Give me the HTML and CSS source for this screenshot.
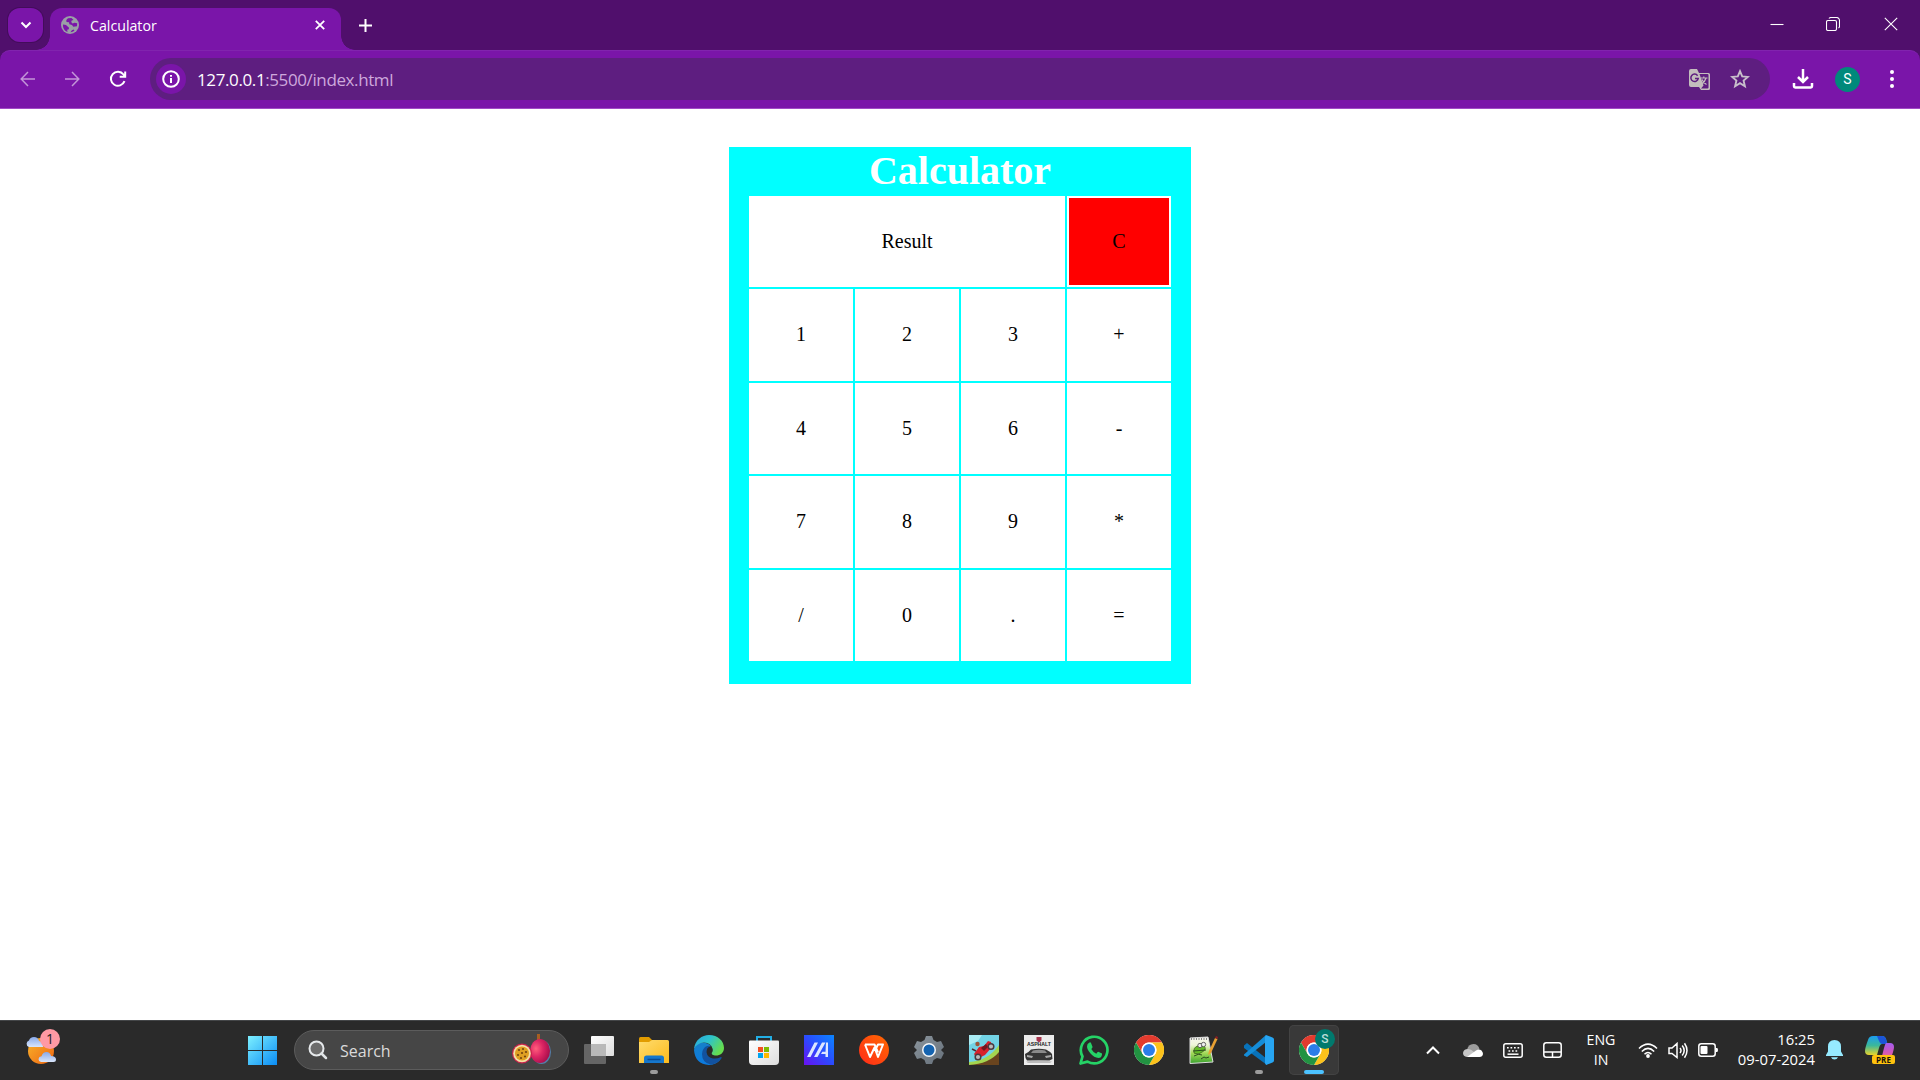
FILE: index.html
```html
<!DOCTYPE html>
<html lang="en">
<head>
<meta charset="utf-8">
<title>Calculator</title>
<link rel="stylesheet" href="styles.css">
</head>
<body>
<svg class="defs" width="0" height="0" aria-hidden="true">
  <defs>
    <linearGradient id="win" x1="0" y1="0" x2="1" y2="1"><stop offset="0" stop-color="#7df0ff"/><stop offset="1" stop-color="#0a8cf5"/></linearGradient>
    <linearGradient id="sun" x1="0" y1="0" x2="1" y2="1"><stop offset="0" stop-color="#f9b52b"/><stop offset="1" stop-color="#ee6512"/></linearGradient>
    <linearGradient id="cloud" x1="0" y1="0" x2="0" y2="1"><stop offset="0" stop-color="#88a9ea"/><stop offset="1" stop-color="#d9e6fb"/></linearGradient>
    <radialGradient id="fruit" cx=".3" cy=".4" r=".7"><stop offset="0" stop-color="#ff5f7c"/><stop offset=".5" stop-color="#dc2564"/><stop offset="1" stop-color="#a80f4c"/></radialGradient>
    <linearGradient id="folder" x1="0" y1="0" x2="1" y2="1"><stop offset="0" stop-color="#ffdc6e"/><stop offset="1" stop-color="#fcba1c"/></linearGradient>
    <linearGradient id="edgeTop" x1="0" y1="0" x2="1" y2=".5"><stop offset="0" stop-color="#2aa5df"/><stop offset=".5" stop-color="#2dc3cd"/><stop offset="1" stop-color="#65dd4f"/></linearGradient>
    <linearGradient id="edgeLow" x1="0" y1="0" x2="0" y2="1"><stop offset="0" stop-color="#1780c8"/><stop offset="1" stop-color="#0b7ae0"/></linearGradient>
    <linearGradient id="myasus" x1="1" y1="0" x2="0" y2="1"><stop offset="0" stop-color="#0a86ff"/><stop offset=".5" stop-color="#2b4bff"/><stop offset="1" stop-color="#6a10f0"/></linearGradient>
    <linearGradient id="wps" x1="0" y1="1" x2="1" y2="0"><stop offset="0" stop-color="#ff2a1a"/><stop offset="1" stop-color="#ff6a00"/></linearGradient>
    <linearGradient id="gear" x1="0" y1="0" x2="1" y2="1"><stop offset="0" stop-color="#8b959d"/><stop offset="1" stop-color="#66707a"/></linearGradient>
    <linearGradient id="npp" x1="0" y1="0" x2="0" y2="1"><stop offset="0" stop-color="#f7f7f0"/><stop offset=".3" stop-color="#eef6d8"/><stop offset=".6" stop-color="#a6dc5a"/><stop offset="1" stop-color="#37a02c"/></linearGradient>
    <linearGradient id="copA" x1="0" y1="0" x2="0" y2="1"><stop offset="0" stop-color="#1b9df0"/><stop offset=".5" stop-color="#3bb89a"/><stop offset="1" stop-color="#e9d22a"/></linearGradient>
    <linearGradient id="copB" x1="0" y1="0" x2="0" y2="1"><stop offset="0" stop-color="#a35cf0"/><stop offset=".5" stop-color="#d358b8"/><stop offset="1" stop-color="#ff7a60"/></linearGradient>
    <linearGradient id="pane" x1="0" y1="0" x2="1" y2="1"><stop offset="0" stop-color="#fff"/><stop offset="1" stop-color="#ddd"/></linearGradient>
    <symbol id="chrome" viewBox="0 0 30 30">
      <circle cx="15" cy="15" r="15" fill="#fff"/>
      <path d="M2 7.500A15 15 0 0 1 28 7.500H15A7.500 7.500 0 0 0 8.500 18.700Z" fill="#e33b2e"/>
      <path d="M28 7.500A15 15 0 0 1 15 30L21.500 18.700A7.500 7.500 0 0 0 15 7.500Z" fill="#fcc21b"/>
      <path d="M15 30A15 15 0 0 1 2 7.500L8.500 18.700A7.500 7.500 0 0 0 21.500 18.700Z" fill="#229342"/>
      <circle cx="15" cy="15" r="7.500" fill="#fff"/>
      <circle cx="15" cy="15" r="6" fill="#2b7de9"/>
    </symbol>
  </defs>
</svg>

<div class="browser">
  <header class="tabstrip">
    <button class="tab-search"><svg width="12" height="8" viewBox="0 0 12 8"><path d="M1.500 1.500 6 6l4.500-4.500" class="line w2"/></svg></button>
    <div class="tab">
      <svg width="18" height="18" viewBox="0 0 18 18"><circle cx="9" cy="9" r="9" fill="#9aa0a6"/><path d="M10.500 2.100 7 2.200 5.300 4.100 5.500 6 8 6.300 8.400 8.300 11 9l1.300 1.800 3.700-.6.2-3-2.500-.5-2.200.8-1.300-1.600.5-1.500 1.800-.5ZM2 8.500l3 .4 3 2.800-.2 1.500-1.600.6.300 2.300C3.700 15 1.700 12.300 2 8.500ZM9.500 16.200l1.400-2 1.900-.6.6 1.100a8 8 0 0 1-3.900 1.500Z" fill="#7a15a9"/></svg>
      <span class="tab-title">Calculator</span>
      <svg class="tab-close" width="10" height="10" viewBox="0 0 10 10"><path d="M.8.8l8.400 8.400M9.200.8.8 9.200" class="line w18"/></svg>
    </div>
    <svg class="new-tab" width="13" height="13" viewBox="0 0 13 13"><path d="M6.500 0v13M0 6.500h13" class="line w2"/></svg>
    <div class="window-buttons">
      <svg width="14" height="14" viewBox="0 0 14 14"><path d="M.5 7.500h13" class="line"/></svg>
      <svg width="14" height="14" viewBox="0 0 14 14"><rect x=".5" y="3.500" width="10" height="10" rx="1.500" class="line"/><path d="M3 1.500Q3.500.5 5 .5h5.500a3 3 0 0 1 3 3V9.500q0 1-1 1.500" class="line"/></svg>
      <svg width="14" height="14" viewBox="0 0 14 14"><path d="M.8.8l12.400 12.400M13.200.8.8 13.200" class="line"/></svg>
    </div>
  </header>
  <nav class="toolbar">
    <svg class="dim" width="16" height="16" viewBox="0 0 16 16"><path d="M15 8H1.500M8 1 1.200 8 8 15" class="line w15"/></svg>
    <svg class="dim" width="16" height="16" viewBox="0 0 16 16"><path d="M1 8h13.500M8 1l6.800 7L8 15" class="line w15"/></svg>
    <svg width="18" height="18" viewBox="0 0 18 18"><path d="M15.500 11.200A7 7 0 1 1 14.500 4.500L16 6.500M16.200 1.500v5.300h-5.500" class="line w2"/></svg>
    <div class="omnibox">
      <span class="site-info"><svg width="18" height="18" viewBox="0 0 18 18"><circle cx="9" cy="9" r="7.800" class="line w2"/><path d="M9 8v5M9 5v1.700" class="line w2"/></svg></span>
      <span class="url"><b>127.0.0.1</b>:5500/index.html</span>
      <svg class="translate" width="21" height="21" viewBox="0 0 21 21"><path d="M2 0h6l2 4h9.500Q21 4 21 5.500v14q0 1.500-1.500 1.500H12l-2-3H2Q0 18 0 16V2Q0 0 2 0Z" fill="#c3bdbd"/><path d="M10.500 5h8q1 0 1 1v12.500q0 1-1 1H12l2.500-3Z" fill="#5e1e80"/><path d="M8.600 6.700A3.700 3.700 0 1 0 9.200 9.500H6" fill="none" stroke="#5e1e80" stroke-width="1.500"/><path d="M11.500 9h7M14.800 7.500V9M17 9q-1 4-4.500 6M13 10.500q1.500 3.500 4.500 5" fill="none" stroke="#c3bdbd" stroke-width="1.200"/></svg>
      <svg width="20" height="20" viewBox="0 0 20 20"><path d="M10 2.200 12.200 7.400 17.900 7.900 13.600 11.600 14.900 17.200 10 14.200 5.100 17.200 6.400 11.600 2.100 7.900 7.800 7.400Z" fill="none" stroke="#c8bfcb" stroke-width="1.900"/></svg>
    </div>
    <svg class="download" width="22" height="20" viewBox="0 0 22 20"><path d="M11 0v12M6 8l5 5 5-5" class="line w25"/><path d="M2 14v3.300q0 1.200 1.200 1.200h15.600q1.200 0 1.200-1.200V14" class="line w25"/></svg>
    <span class="avatar">S</span>
    <svg width="4" height="18" viewBox="0 0 4 18" fill="#fff"><circle cx="2" cy="2" r="2"/><circle cx="2" cy="9" r="2"/><circle cx="2" cy="16" r="2"/></svg>
  </nav>
</div>

<main class="page">
  <section class="calculator">
    <h1>Calculator</h1>
    <div class="keys">
      <div class="key result">Result</div><div class="key clear">C</div>
      <div class="key">1</div><div class="key">2</div><div class="key">3</div><div class="key">+</div>
      <div class="key">4</div><div class="key">5</div><div class="key">6</div><div class="key">-</div>
      <div class="key">7</div><div class="key">8</div><div class="key">9</div><div class="key">*</div>
      <div class="key">/</div><div class="key">0</div><div class="key">.</div><div class="key">=</div>
    </div>
  </section>
</main>

<footer class="taskbar">
  <div class="weather">
    <svg width="32" height="32" viewBox="0 0 32 32"><circle cx="15" cy="17" r="13" fill="url(#sun)"/><path d="M3 13a3.400 3.400 0 0 1 0-6.500Q4 3 8 3q4 0 5 4 4 0 4 6Z" fill="url(#cloud)"/><path d="M15 28q-2.500-.5-2.500-3 .3-2.500 3-2.800Q17 18 20.500 18q3.500 0 4.500 4 5 0 5 3.500 0 2.500-2.500 2.500Z" fill="url(#cloud)"/></svg>
    <span class="badge">1</span>
  </div>
  <svg class="start" width="29" height="29" viewBox="0 0 29 29"><path d="M0 0h14v14H0ZM15 0h14v14H15ZM0 15h14v14H0ZM15 15h14v14H15Z" fill="url(#win)"/></svg>
  <div class="search">
    <svg width="20" height="20" viewBox="0 0 20 20"><circle cx="8.500" cy="8.500" r="7" fill="#6c6c6c" stroke="#e6e9eb" stroke-width="2"/><path d="M13.500 13.500 18 18" stroke="#dfe3e5" stroke-width="2.500" stroke-linecap="round"/></svg>
    <span>Search</span>
    <svg width="39" height="32" viewBox="0 0 39 32"><path d="M25 0h3v7h-3Z" fill="#a85e22"/><ellipse cx="29.500" cy="18" rx="9.500" ry="12" fill="#547da8"/><ellipse cx="28" cy="17" rx="10" ry="12" fill="url(#fruit)"/><circle cx="10" cy="19.500" r="10" fill="#cb224c"/><circle cx="10" cy="19.500" r="8.800" fill="#f3dfa6"/><circle cx="10" cy="19.500" r="7" fill="#dfa022"/><g fill="#744510"><circle cx="7" cy="16" r="1.100"/><circle cx="11" cy="15" r="1.100"/><circle cx="14" cy="18" r="1.100"/><circle cx="10" cy="19" r="1.100"/><circle cx="6" cy="21" r="1.100"/><circle cx="13" cy="22.500" r="1.100"/><circle cx="9" cy="24" r="1.100"/></g></svg>
  </div>
  <div class="apps">
    <span class="app"><svg width="30" height="30" viewBox="0 0 30 30"><rect x="0" y="9" width="22" height="20" rx="1" fill="#656565"/><rect x="7" y="1" width="23" height="20" rx="1" fill="url(#pane)"/><path d="M7 9h15v12H8q-1 0-1-1Z" fill="#b9b9b9"/></svg></span>
    <span class="app open"><svg width="30" height="30" viewBox="0 0 30 30"><path d="M0 3.500Q0 2 1.500 2H10l3 3v4H0Z" fill="#e29c00"/><path d="M0 7h10l3-2h15.500Q30 5 30 6.500V28H0Z" fill="url(#folder)"/><path d="M5 28v-5q0-2.500 2.500-2.500h15Q25 20.500 25 23v5Z" fill="#1677cc"/><path d="M8.500 24.500h13" stroke="#0b4b92" stroke-width="1.500"/></svg></span>
    <span class="app"><svg width="30" height="30" viewBox="0 0 30 30"><path d="M0 15Q1 8 8 7.500q6 0 9 3.500-5 1-5 6 0 5 5 7 5 1.500 10.500-1Q23 30 15 30 1 29 0 15Z" fill="url(#edgeLow)"/><path d="M9.500 14q2.500-4 7.500-3-5 1-4.500 6.500 1 5 6.500 6 4 .5 8-1.500 1 0 .5 1-4 6-11 6.500Q8 27.500 8 19q0-3 1.500-5Z" fill="#12529f"/><path d="M0 14C1 5 8 0 15 0c9 0 15 6 15 13 0 5-4 7.500-8 7.500-3 0-5-1.300-4-3 1-1.500 1-2.500.5-4Q17 8 10 7.500 3 8 0 14Z" fill="url(#edgeTop)"/></svg></span>
    <span class="app"><svg width="30" height="30" viewBox="0 0 30 30"><path d="M8 7V2h14v5" fill="none" stroke="#22aee4" stroke-width="2"/><path d="M0 6.500Q0 5.500 1 5.500h28q1 0 1 1V26q0 4-4 4H4q-4 0-4-4Z" fill="url(#pane)"/><path d="M9 12h5v5H9Z" fill="#f25022"/><path d="M15 12h5v5h-5Z" fill="#7fba00"/><path d="M9 18h5v5H9Z" fill="#00a4ef"/><path d="M15 18h5v5h-5Z" fill="#ffb900"/></svg></span>
    <span class="app"><svg width="30" height="30" viewBox="0 0 30 30"><path d="M0 0h30v30H0Z" fill="url(#myasus)"/><path d="M3 22 10.500 7.500h3.500L6.500 22ZM10 22l8-14.500h3.500L13.500 22ZM22 7.500h2V22h-2.500v-3H17l1.300-2.300h3.200Z" fill="#dce6ff"/></svg></span>
    <span class="app"><svg width="30" height="30" viewBox="0 0 30 30"><circle cx="15" cy="15" r="15" fill="url(#wps)"/><path d="M6 9.500h9.500l3.500 8M6 9.500 11 22l4.500-9.500L19 22 24 9.500h-5l-1.500 3" fill="none" stroke="#fff" stroke-width="2" stroke-linejoin="round"/></svg></span>
    <span class="app"><svg width="30" height="30" viewBox="0 0 30 30"><path d="M12 1h6l1.500 4L23 7l4-1 3 6-3 3 3 3-3 6-4-1-3.500 2L18 29h-6l-1.500-4L7 23l-4 1-3-6 3-3-3-3 3-6 4 1 3.500-2Z" fill="url(#gear)"/><circle cx="15" cy="15" r="7" fill="#f5f8fb"/><circle cx="15" cy="15" r="5.500" fill="#1463b0"/></svg></span>
    <span class="app"><svg width="30" height="30" viewBox="0 0 30 30"><path d="M0 0h30v30H0Z" fill="#72d4e6"/><path d="M0 0h13l-4 6-9 4Z" fill="#a9ecf4"/><path d="M0 27Q19 26 30 10v20H0Z" fill="#a4d650"/><path d="M0 30Q20 29 30 17v13Z" fill="#69441e"/><path d="m5 19 5-7 5-1 4-5 3 1 1 5-7 8-8 4Z" fill="#d8202b"/><path d="m12 13 5-4 2 3-4 4Z" fill="#701820"/><circle cx="8.500" cy="9" r="2.200" fill="#9b563a"/><path d="m3 14 4 2" stroke="#4f2b33" stroke-width="1.500"/><circle cx="9" cy="22" r="2.800" fill="#bbb" stroke="#4a3a40" stroke-width="1.500"/><circle cx="22" cy="11.500" r="2.800" fill="#bbb" stroke="#4a3a40" stroke-width="1.500"/></svg></span>
    <span class="app"><svg width="30" height="30" viewBox="0 0 30 30"><path d="M0 0h30v30H0Z" fill="#ececec"/><path d="M12.500 2h5v3.500L15 7.500l-2.500-2Z" fill="#a8354d"/><text x="15" y="11.300" class="asphalt" text-anchor="middle" textLength="24" lengthAdjust="spacingAndGlyphs">ASPHALT</text><path d="M1 19q3-1 6-4.500 8-1.500 15 0 4 2 6 4.500l.5 5-3 1.500H3L1.500 23Z" fill="#353535"/><path d="M9 15.500q6-1.500 12 0l2 2.500H7Z" fill="#8a8a8a"/><path d="m3 20 6 1-1 2-5-1Zm24 0-6 1 1 2 5-1Z" fill="#a7a7a7"/><path d="M2 26.500q13-2 26 0l-2 1.500H4Z" fill="#bbb"/></svg></span>
    <span class="app"><svg width="30" height="30" viewBox="0 0 30 30"><path d="M1.500 28.500 3.500 21.500A13.300 13.300 0 1 1 8.500 26.600Z" fill="none" stroke="#25d366" stroke-width="2.700" stroke-linejoin="round"/><path d="M10.500 7.500Q8 8.500 8 11.500q0 3 3.500 7t8 4.500q3 0 3.500-3.500v-1L19.300 16.700q-.8 0-2 2-3-1-5-4.700 1.500-1.500 1.200-2.200L12 8Q11.500 7 10.500 7.500Z" fill="#25d366"/></svg></span>
    <span class="app"><svg width="30" height="30"><use href="#chrome"/></svg></span>
    <span class="app"><svg width="30" height="30" viewBox="0 0 30 30"><path d="m1 3 18-1 5 25-23 1.500Z" fill="url(#npp)" stroke="#ddd"/><path d="M2 4h17" stroke="#888" stroke-width="2" stroke-dasharray="1 1.500"/><path d="M5 18q-1-6 4-7 3-1 6 0 3 3-1 5.500-5 4-8 2Z" fill="#65bb28" stroke="#3a5520" stroke-width=".7"/><circle cx="11" cy="10.500" r="2.200" fill="#eee" stroke="#444" stroke-width=".8"/><circle cx="14.500" cy="9.500" r="2.200" fill="#eee" stroke="#444" stroke-width=".8"/><path d="m4 16 13-1M5 21q5-3 8-1M12 24l3-2 2 1 3-1" fill="none" stroke="#25401c" stroke-width=".9"/><path d="m19 20 1-4 6-13 2.500 1L22 18Z" fill="#e8a032"/><path d="m26 3 1-2 2 1-.5 2Z" fill="#8b1d24"/></svg></span>
    <span class="app open"><svg width="30" height="30" viewBox="0 0 30 30"><path d="M0 10.500 3 8l20 16v6L0 13Z" fill="#0872b9"/><path d="M0 19.500 22 0v7L3 22 0 20.500Z" fill="#158dd8"/><path d="m22 0 6.500 2.500Q30 3 30 4.500v21q0 1.500-1.500 2L22 30l-1-2V2Z" fill="#27a5f2"/></svg></span>
    <span class="app active"><svg width="30" height="30"><use href="#chrome"/></svg><span class="profile">S</span></span>
  </div>
  <div class="tray">
    <svg width="14" height="9" viewBox="0 0 14 9"><path d="M1 7.500 7 1.500l6 6" class="line w2"/></svg>
    <svg width="20" height="13" viewBox="0 0 20 13"><path d="M4 6Q5 0 10.500 0 15 0 16.500 5l-5 4Z" fill="#9b9b9b"/><path d="M4 13q-4-.5-4-4 .5-4 5-4 3 0 6 3l6 4Z" fill="#c6c6c6"/><path d="M4 13 13 6.500q3-2 5.500 0Q20 8 20 10q-.5 3-3.500 3Z" fill="#fff"/></svg>
    <svg width="20" height="15" viewBox="0 0 20 15"><rect x=".8" y=".8" width="18.400" height="13.400" rx="2" class="line w15"/><path d="M4 4.800h12.500M5.500 8h10" class="line w15" stroke-dasharray="1.700 1.800"/><path d="M4.500 11.200h11" class="line w15"/></svg>
    <svg width="19" height="16" viewBox="0 0 19 16"><rect x=".8" y=".8" width="17.400" height="14.400" rx="2.500" class="line w15"/><path d="M1 10h17M9.500 10v5" class="line w15"/></svg>
    <span class="language">ENG<br>IN</span>
    <svg width="20" height="15" viewBox="0 0 20 15"><path d="M1 5.500Q10-3.300 19 5.500M3.800 8.500q6.200-6.200 12.400 0M6.500 11.300q3.500-3.500 7 0" class="line w15"/><circle cx="10" cy="13" r="1.900" fill="#fff"/></svg>
    <svg width="20" height="17" viewBox="0 0 20 17"><path d="M1 6h3l5-4.500v14L4 11.500H1ZM12 6q2 2.500 0 5M14.200 3.500q4 5 0 10M16.500 1.300q5 7.200 0 14.400" class="line w15"/></svg>
    <svg width="20" height="14" viewBox="0 0 20 14"><rect x=".8" y=".8" width="16.400" height="12.400" rx="2.500" class="line w15"/><rect x="2.500" y="3" width="7" height="8" rx="1" fill="#fff"/><path d="M17.500 5H19q1 0 1 2t-1 2h-1.500Z" fill="#fff"/></svg>
    <span class="clock">16:25<br>09-07-2024</span>
    <svg class="bell" width="17" height="20" viewBox="0 0 17 20"><path d="M8.500 0q6.300 0 6.500 6.500v5L17 15v1H0v-1l2-3.500v-5Q2.200 0 8.500 0ZM5 17.200h7Q11 19.500 8.500 19.500T5 17.200Z" fill="#96eaff"/></svg>
    <div class="copilot">
      <svg width="30" height="28" viewBox="0 0 30 28"><path d="M8 0h9q3 0 4 3l1.500 5H17q-2 0-3 4l-2 7H4q-4 0-4-4 0-3 3-11Q4 0 8 0Z" fill="url(#copA)"/><path d="M12 0h5q3 0 4 3l1.500 5H17q-2 0-3-3Z" fill="#1c55d8"/><path d="M21 7h4q4 0 4 4 0 3-3 11-1 4-5 4h-9q4-1 5-6l2-8q1-4 2-5Z" fill="url(#copB)"/></svg>
      <span class="pre">PRE</span>
    </div>
  </div>
</footer>
</body>
</html>
```
FILE: styles.css
```css
* { box-sizing: border-box; }
html, body { margin: 0; height: 100%; }
body {
  display: flex;
  flex-direction: column;
  height: 1080px;
  overflow: hidden;
  background: #fff;
  font-family: "Open Sans", "Noto Sans", sans-serif;
}
svg { display: block; flex: none; }
.defs { position: absolute; }
.line { fill: none; stroke: #fff; stroke-width: 1.1; }
.w15 { stroke-width: 1.5; }
.w18 { stroke-width: 1.8; }
.w2 { stroke-width: 2; }
.w25 { stroke-width: 2.5; }

/* Browser frame */
.browser { flex: none; height: 109px; background: #500f6c; }
.tabstrip { display: flex; height: 50px; padding: 8px 0 0 8px; }
.tab-search {
  display: flex;
  align-items: center;
  justify-content: center;
  width: 35px;
  height: 34px;
  margin-right: 7px;
  padding: 0;
  border: 0;
  border-radius: 12px;
  background: #7a15a9;
  box-shadow: 0 0 0 1px #430c5b;
}
.tab {
  position: relative;
  display: flex;
  align-items: center;
  width: 291px;
  height: 42px;
  padding: 0 16px 8px 11px;
  border-radius: 12px 12px 0 0;
  background: #7a15a9;
}
.tab::before, .tab::after {
  content: "";
  position: absolute;
  bottom: 0;
  width: 14px;
  height: 14px;
}
.tab::before { left: -14px; background: radial-gradient(circle at 0 0, transparent 13.5px, #7a15a9 14px); }
.tab::after { right: -14px; background: radial-gradient(circle at 100% 0, transparent 13.5px, #7a15a9 14px); }
.tab-title { margin-left: 11px; padding-top: 2px; color: #fff; font-size: 14.200px; line-height: 20px; }
.tab-close { margin-left: auto; }
.new-tab { margin: 11px 0 0 18px; }
.window-buttons { display: flex; gap: 42px; margin: 9px 22px 0 auto; }
.window-buttons svg:last-child { margin-left: 2px; }
.toolbar {
  display: flex;
  align-items: center;
  height: 59px;
  padding: 0 26px 1px 20px;
  border-top: 1px solid #8124ae;
  border-bottom: 1px solid #a14bc6;
  border-radius: 10px 10px 0 0;
  background: #7a15a9;
}
.toolbar > svg:nth-child(2) { margin: 0 29px 0 28px; }
.dim { opacity: .55; }
.omnibox {
  display: flex;
  flex: none;
  align-items: center;
  width: 1620px;
  height: 42px;
  margin-left: 23px;
  padding: 0 20px 0 6px;
  border-radius: 21px;
  background: #5e1e80;
}
.site-info {
  display: flex;
  align-items: center;
  justify-content: center;
  width: 30px;
  height: 30px;
  border-radius: 50%;
  background: #7a15a9;
}
.url { margin-left: 11px; padding-top: 1px; color: #cda8dc; font-size: 17px; letter-spacing: -.39px; line-height: 24px; }
.url b { color: #fff; font-weight: 400; }
.translate { margin: 0 20px 0 auto; }
.download { margin-left: 22px; }
.avatar {
  flex: none;
  width: 25px;
  height: 25px;
  margin: 0 30px 0 21px;
  border-radius: 50%;
  background: #00897b;
  color: #fff;
  font: 14px/25px Roboto, sans-serif;
  text-align: center;
}

/* Calculator page */
.page { flex: 1; padding-top: 38px; }
.calculator {
  width: 462px;
  height: 537px;
  margin: 0 auto;
  padding: 0 20px;
  background: #0ff;
  font-family: "Liberation Serif", serif;
}
h1 {
  height: 49px;
  margin: 0;
  padding-top: 1px;
  color: #fff;
  font-size: 40px;
  line-height: 46px;
  text-align: center;
}
.keys {
  display: grid;
  grid-template-columns: repeat(4, 104px);
  grid-template-rows: 91px 92px 91px 92px 91px;
  gap: 2px;
}
.key {
  padding-top: 34px;
  background: #fff;
  color: #000;
  font-size: 20px;
  line-height: 22px;
  text-align: center;
}
.result { grid-column: span 3; }
.clear { padding-top: 32px; border: 2px solid #fff; background: #f00; }

/* Taskbar */
.taskbar {
  display: flex;
  align-items: center;
  flex: none;
  height: 60px;
  padding-bottom: 1px;
  border-top: 1px solid #444648;
  background: #2a2a2a;
  color: #fff;
}
.weather { position: relative; margin-left: 26px; }
.badge {
  position: absolute;
  top: -5px;
  left: 14px;
  width: 20px;
  height: 20px;
  border-radius: 50%;
  background: #ff99a4;
  color: #222;
  font-size: 14px;
  line-height: 20px;
  text-align: center;
}
.start { margin-left: 190px; }
.search {
  display: flex;
  align-items: center;
  width: 275px;
  height: 40px;
  margin-left: 17px;
  padding: 0 17px 0 13px;
  border: 1px solid #5c5c5c;
  border-radius: 20px;
  background: #464646;
  color: #dadada;
  font-size: 16px;
}
.search span { margin: 0 auto 0 12px; padding-top: 1px; line-height: 22px; }
.apps { display: flex; margin-left: 5px; }
.app {
  position: relative;
  display: flex;
  align-items: center;
  justify-content: center;
  width: 50px;
  height: 50px;
  margin-right: 5px;
  border-radius: 5px;
}
.open::after, .active::after {
  content: "";
  position: absolute;
  bottom: 1px;
  width: 8px;
  height: 4px;
  border-radius: 2px;
  background: #9c9c9c;
}
.active { background: #393939; box-shadow: inset 0 0 0 1px #434343; }
.active::after { width: 20px; background: #4cc2ff; }
.profile {
  position: absolute;
  top: 4px;
  left: 26px;
  width: 20px;
  height: 20px;
  border-radius: 50%;
  background: #00796d;
  color: #b9ddd8;
  font: 500 12px/20px Roboto, sans-serif;
  text-align: center;
}
.tray { display: flex; align-items: center; margin-left: 82px; }
.tray > svg:nth-child(2) { margin: 0 20px 0 23px; }
.tray > svg:nth-child(3) { margin-right: 20px; }
.language { width: 40px; margin-left: 19px; font-size: 14.200px; line-height: 20px; text-align: center; }
.tray > svg:nth-child(6) { margin: 0 10px 0 17px; }
.tray > svg:nth-child(7) { margin-right: 10px; }
.clock { width: 90px; margin-left: 7px; padding-bottom: 2px; font-size: 14.800px; line-height: 20px; text-align: right; }
.bell { margin-left: 11px; }
.copilot { position: relative; margin: 0 0 0 22px; }
.pre {
  position: absolute;
  top: 19px;
  left: 7px;
  width: 23px;
  height: 9px;
  border-radius: 2px;
  background: #ffc20e;
  color: #16130a;
  font-size: 8px;
  font-weight: 700;
  line-height: 9px;
  text-align: center;
}
.asphalt { fill: #222; font: 700 4.500px "Liberation Sans", sans-serif; }
```
